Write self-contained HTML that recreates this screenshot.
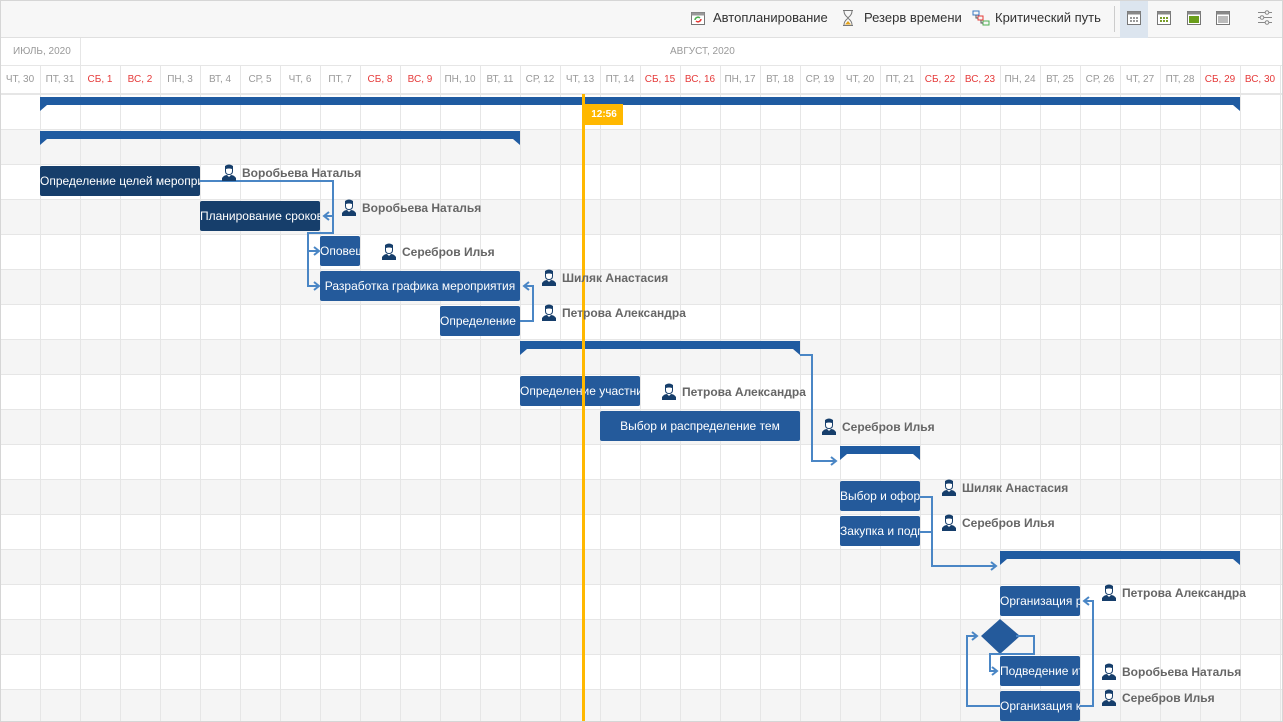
<!DOCTYPE html>
<html><head><meta charset="utf-8"><style>
*{margin:0;padding:0;box-sizing:border-box}
body{width:1283px;height:722px;overflow:hidden;background:#fff;font-family:"Liberation Sans","DejaVu Sans",sans-serif;position:relative}
.tb{position:absolute;left:0;top:0;width:1283px;height:38px;background:#f7f7f7;border-bottom:1px solid #e0e0e0}
.tb span{position:absolute;top:10px;font-size:13px;color:#333}
.hdr{position:absolute;left:0;top:38px;width:1283px;height:56px;background:#fff}
.mon{position:absolute;top:8px;font-size:10px;color:#999}
.day{position:absolute;top:36px;width:40px;text-align:center;font-size:10px;color:#999}
.day.r{color:#e53b3b}
.grid{position:absolute;left:0;top:94px;width:1283px;height:628px;
background-image:linear-gradient(to right,#e6e6e6 1px,transparent 1px),linear-gradient(to bottom,#e6e6e6 1px,transparent 1px),repeating-linear-gradient(to bottom,#fff 0,#fff 35px,#f5f5f5 35px,#f5f5f5 70px);
background-size:40px 100%,100% 35px,100% 100%;background-position:0 0,0 0,0 0}
.t{position:absolute;height:30px;background:#245a9b;color:#fff;font-size:12px;line-height:30px;white-space:nowrap;overflow:hidden;border-radius:2px}
.t.d{background:#163e6b}
.res{position:absolute;font-size:12px;font-weight:bold;color:#666;white-space:nowrap;padding-left:21px}
.res svg{position:absolute;left:0;top:-2px}
</style></head><body>
<div class="tb">
<svg style="position:absolute;left:690px;top:10px" width="16" height="16"><rect x="1.5" y="2.5" width="13" height="12" fill="#fff" stroke="#777"/><rect x="1.5" y="2.5" width="13" height="3" fill="#999"/><path d="M5 10a3 3 0 0 1 5-2" stroke="#4caf50" fill="none" stroke-width="1.5"/><path d="M11 9a3 3 0 0 1-5 2" stroke="#e53935" fill="none" stroke-width="1.5"/></svg>
<span style="left:713px">Автопланирование</span>
<svg style="position:absolute;left:841px;top:9px" width="14" height="18"><path d="M2 1.5H12M2 16.5H12M3 2C3 7 7 8 7 9C7 10 3 11 3 16M11 2C11 7 7 8 7 9C7 10 11 11 11 16" stroke="#777" fill="none"/><path d="M4 15.5L7 12L10 15.5Z" fill="#e3a21a"/></svg>
<span style="left:864px">Резерв времени</span>
<svg style="position:absolute;left:972px;top:10px" width="18" height="16"><rect x="1" y="1" width="6" height="4" fill="none" stroke="#3a78c2"/><rect x="6" y="6" width="5" height="4" fill="none" stroke="#e53935"/><rect x="11" y="11" width="6" height="4" fill="none" stroke="#4caf50"/><path d="M4 5V8H6M9 10V13H11" stroke="#555" fill="none"/></svg>
<span style="left:995px">Критический путь</span>
<div style="position:absolute;left:1114px;top:6px;width:1px;height:26px;background:#ccc"></div>
<div style="position:absolute;left:1120px;top:0;width:28px;height:38px;background:#dce5ef"></div>
<svg style="position:absolute;left:1126px;top:10px" width="16" height="16"><rect x="1.5" y="1.5" width="13" height="13" fill="#fff" stroke="#777"/><rect x="1.5" y="1.5" width="13" height="3" fill="#888"/><path d="M4 7h2v2H4zM7 7h2v2H7zM10 7h2v2h-2zM4 10h2v2H4zM7 10h2v2H7zM10 10h2v2h-2z" fill="#9a9a9a"/></svg>
<svg style="position:absolute;left:1156px;top:10px" width="16" height="16"><rect x="1.5" y="1.5" width="13" height="13" fill="#fff" stroke="#777"/><rect x="1.5" y="1.5" width="13" height="3" fill="#888"/><path d="M4 7h2v2H4zM7 7h2v2H7zM10 7h2v2h-2zM4 10h2v2H4zM7 10h2v2H7zM10 10h2v2h-2z" fill="#7a9e2a"/></svg>
<svg style="position:absolute;left:1186px;top:10px" width="16" height="16"><rect x="1.5" y="1.5" width="13" height="13" fill="#fff" stroke="#777"/><rect x="1.5" y="1.5" width="13" height="3" fill="#888"/><path d="M3 6h10v7H3z" fill="#6a9e1a"/></svg>
<svg style="position:absolute;left:1215px;top:10px" width="16" height="16"><rect x="1.5" y="1.5" width="13" height="13" fill="#fff" stroke="#777"/><rect x="1.5" y="1.5" width="13" height="3" fill="#888"/><path d="M3 6h10v7H3z" fill="#bbb"/></svg>
<svg style="position:absolute;left:1257px;top:9px" width="16" height="16"><path d="M1 3.5h14M1 8.5h14M1 13.5h14" stroke="#888"/><circle cx="10" cy="3.5" r="1.8" fill="#f7f7f7" stroke="#888"/><circle cx="5" cy="8.5" r="1.8" fill="#f7f7f7" stroke="#888"/><circle cx="10" cy="13.5" r="1.8" fill="#f7f7f7" stroke="#888"/></svg>
</div>
<div class="hdr">
<div style="position:absolute;left:0;top:27px;width:1283px;height:1px;background:#e6e6e6"></div>
<div style="position:absolute;left:0;top:55px;width:1283px;height:1px;background:#e6e6e6"></div>
<div style="position:absolute;left:80px;top:0;width:1px;height:28px;background:#e6e6e6"></div>
<div class="mon" style="left:13px">ИЮЛЬ, 2020</div>
<div class="mon" style="left:670px">АВГУСТ, 2020</div>
<div style="position:absolute;left:0;top:28px;width:1283px;height:28px;background-image:linear-gradient(to right,#e6e6e6 1px,transparent 1px);background-size:40px 100%;background-position:40px 0"></div>
<div class="day" style="left:0">ЧТ, 30</div><div class="day" style="left:40px">ПТ, 31</div><div class="day r" style="left:80px">СБ, 1</div><div class="day r" style="left:120px">ВС, 2</div><div class="day" style="left:160px">ПН, 3</div><div class="day" style="left:200px">ВТ, 4</div><div class="day" style="left:240px">СР, 5</div><div class="day" style="left:280px">ЧТ, 6</div><div class="day" style="left:320px">ПТ, 7</div><div class="day r" style="left:360px">СБ, 8</div><div class="day r" style="left:400px">ВС, 9</div><div class="day" style="left:440px">ПН, 10</div><div class="day" style="left:480px">ВТ, 11</div><div class="day" style="left:520px">СР, 12</div><div class="day" style="left:560px">ЧТ, 13</div><div class="day" style="left:600px">ПТ, 14</div><div class="day r" style="left:640px">СБ, 15</div><div class="day r" style="left:680px">ВС, 16</div><div class="day" style="left:720px">ПН, 17</div><div class="day" style="left:760px">ВТ, 18</div><div class="day" style="left:800px">СР, 19</div><div class="day" style="left:840px">ЧТ, 20</div><div class="day" style="left:880px">ПТ, 21</div><div class="day r" style="left:920px">СБ, 22</div><div class="day r" style="left:960px">ВС, 23</div><div class="day" style="left:1000px">ПН, 24</div><div class="day" style="left:1040px">ВТ, 25</div><div class="day" style="left:1080px">СР, 26</div><div class="day" style="left:1120px">ЧТ, 27</div><div class="day" style="left:1160px">ПТ, 28</div><div class="day r" style="left:1200px">СБ, 29</div><div class="day r" style="left:1240px">ВС, 30</div>
</div>
<div class="grid"></div>
<svg style="position:absolute;left:0;top:0" width="1283" height="722">
<defs><g id="sum"></g></defs>
<g fill="#1f5ba1">
<path d="M40 97H1240V111L1233 105H47L40 111Z"/>
<path d="M40 131H520V145L513 139H47L40 145Z"/>
<path d="M520 341H800V355L793 349H527L520 355Z"/>
<path d="M840 446H920V460L913 454H847L840 460Z"/>
<path d="M1000 551H1240V565L1233 559H1007L1000 565Z"/>
<path d="M1000 619L1020 636L1000 654L981 636Z" fill="#245a9b"/>
</g>
<g stroke="#4a86c5" stroke-width="2" fill="none">
<path d="M200 181H333V233H308V286H318"/>
<path d="M308 251H318"/>
<path d="M329 212L324 216L329 220M333 216H324"/>
<path d="M314 247L319 251L314 255M314 282L319 286L314 290"/>
<path d="M520 321H533V286H524M529 282L524 286L529 290"/>
<path d="M800 355H812V461H836M831 457L836 461L831 465"/>
<path d="M920 497H932V566H996M920 532H932M991 562L996 566L991 570"/>
<path d="M1080 706H1093V601H1084M1089 597L1084 601L1089 605"/>
<path d="M1016 636H1034V654H990V671H997M992 667L997 671L992 675"/>
<path d="M1000 706H967V636H977M972 632L977 636L972 640"/>
</g>
</svg>
<div class="t d" style="left:40px;top:166px;width:160px">Определение целей мероприятия</div>
<div class="t d" style="left:200px;top:201px;width:120px">Планирование сроков</div>
<div class="t" style="left:320px;top:236px;width:40px">Оповещение</div>
<div class="t" style="left:320px;top:271px;width:200px;text-align:center">Разработка графика мероприятия</div>
<div class="t" style="left:440px;top:306px;width:80px">Определение места</div>
<div class="t" style="left:520px;top:376px;width:120px">Определение участников</div>
<div class="t" style="left:600px;top:411px;width:200px;text-align:center">Выбор и распределение тем</div>
<div class="t" style="left:840px;top:481px;width:80px">Выбор и оформление</div>
<div class="t" style="left:840px;top:516px;width:80px">Закупка и подготовка</div>
<div class="t" style="left:1000px;top:586px;width:80px">Организация рабочих</div>
<div class="t" style="left:1000px;top:656px;width:80px">Подведение итогов</div>
<div class="t" style="left:1000px;top:691px;width:80px">Организация кофе</div>
<div style="position:absolute;left:582px;top:94px;width:3px;height:628px;background:#ffb800"></div>
<div style="position:absolute;left:585px;top:104px;width:38px;height:21px;background:#ffb800;color:#fff;font-size:10px;font-weight:bold;line-height:21px;text-align:center">12:56</div>
<div class="res" style="left:221px;top:166px"><svg width="16" height="17"><path d="M4 2Q8-1 12 2V7Q12 11 8 11Q4 11 4 7ZM1 17V14Q3 11 6 11L8 13L10 11Q13 11 15 14V17Z" fill="#163e6b"/><path d="M5 5Q8 4 11 5V7Q11 10 8 10Q5 10 5 7Z" fill="#fff"/></svg>Воробьева Наталья</div>
<div class="res" style="left:341px;top:201px"><svg width="16" height="17"><path d="M4 2Q8-1 12 2V7Q12 11 8 11Q4 11 4 7ZM1 17V14Q3 11 6 11L8 13L10 11Q13 11 15 14V17Z" fill="#163e6b"/><path d="M5 5Q8 4 11 5V7Q11 10 8 10Q5 10 5 7Z" fill="#fff"/></svg>Воробьева Наталья</div>
<div class="res" style="left:381px;top:245px"><svg width="16" height="17"><path d="M4 2Q8-1 12 2V7Q12 11 8 11Q4 11 4 7ZM1 17V14Q3 11 6 11L8 13L10 11Q13 11 15 14V17Z" fill="#163e6b"/><path d="M5 5Q8 4 11 5V7Q11 10 8 10Q5 10 5 7Z" fill="#fff"/></svg>Серебров Илья</div>
<div class="res" style="left:541px;top:271px"><svg width="16" height="17"><path d="M4 2Q8-1 12 2V7Q12 11 8 11Q4 11 4 7ZM1 17V14Q3 11 6 11L8 13L10 11Q13 11 15 14V17Z" fill="#163e6b"/><path d="M5 5Q8 4 11 5V7Q11 10 8 10Q5 10 5 7Z" fill="#fff"/></svg>Шиляк Анастасия</div>
<div class="res" style="left:541px;top:306px"><svg width="16" height="17"><path d="M4 2Q8-1 12 2V7Q12 11 8 11Q4 11 4 7ZM1 17V14Q3 11 6 11L8 13L10 11Q13 11 15 14V17Z" fill="#163e6b"/><path d="M5 5Q8 4 11 5V7Q11 10 8 10Q5 10 5 7Z" fill="#fff"/></svg>Петрова Александра</div>
<div class="res" style="left:661px;top:385px"><svg width="16" height="17"><path d="M4 2Q8-1 12 2V7Q12 11 8 11Q4 11 4 7ZM1 17V14Q3 11 6 11L8 13L10 11Q13 11 15 14V17Z" fill="#163e6b"/><path d="M5 5Q8 4 11 5V7Q11 10 8 10Q5 10 5 7Z" fill="#fff"/></svg>Петрова Александра</div>
<div class="res" style="left:821px;top:420px"><svg width="16" height="17"><path d="M4 2Q8-1 12 2V7Q12 11 8 11Q4 11 4 7ZM1 17V14Q3 11 6 11L8 13L10 11Q13 11 15 14V17Z" fill="#163e6b"/><path d="M5 5Q8 4 11 5V7Q11 10 8 10Q5 10 5 7Z" fill="#fff"/></svg>Серебров Илья</div>
<div class="res" style="left:941px;top:481px"><svg width="16" height="17"><path d="M4 2Q8-1 12 2V7Q12 11 8 11Q4 11 4 7ZM1 17V14Q3 11 6 11L8 13L10 11Q13 11 15 14V17Z" fill="#163e6b"/><path d="M5 5Q8 4 11 5V7Q11 10 8 10Q5 10 5 7Z" fill="#fff"/></svg>Шиляк Анастасия</div>
<div class="res" style="left:941px;top:516px"><svg width="16" height="17"><path d="M4 2Q8-1 12 2V7Q12 11 8 11Q4 11 4 7ZM1 17V14Q3 11 6 11L8 13L10 11Q13 11 15 14V17Z" fill="#163e6b"/><path d="M5 5Q8 4 11 5V7Q11 10 8 10Q5 10 5 7Z" fill="#fff"/></svg>Серебров Илья</div>
<div class="res" style="left:1101px;top:586px"><svg width="16" height="17"><path d="M4 2Q8-1 12 2V7Q12 11 8 11Q4 11 4 7ZM1 17V14Q3 11 6 11L8 13L10 11Q13 11 15 14V17Z" fill="#163e6b"/><path d="M5 5Q8 4 11 5V7Q11 10 8 10Q5 10 5 7Z" fill="#fff"/></svg>Петрова Александра</div>
<div class="res" style="left:1101px;top:665px"><svg width="16" height="17"><path d="M4 2Q8-1 12 2V7Q12 11 8 11Q4 11 4 7ZM1 17V14Q3 11 6 11L8 13L10 11Q13 11 15 14V17Z" fill="#163e6b"/><path d="M5 5Q8 4 11 5V7Q11 10 8 10Q5 10 5 7Z" fill="#fff"/></svg>Воробьева Наталья</div>
<div class="res" style="left:1101px;top:691px"><svg width="16" height="17"><path d="M4 2Q8-1 12 2V7Q12 11 8 11Q4 11 4 7ZM1 17V14Q3 11 6 11L8 13L10 11Q13 11 15 14V17Z" fill="#163e6b"/><path d="M5 5Q8 4 11 5V7Q11 10 8 10Q5 10 5 7Z" fill="#fff"/></svg>Серебров Илья</div>
<div style="position:absolute;left:0;top:0;width:1283px;height:722px;border:1px solid #d6d6d6;pointer-events:none"></div>
</body></html>
